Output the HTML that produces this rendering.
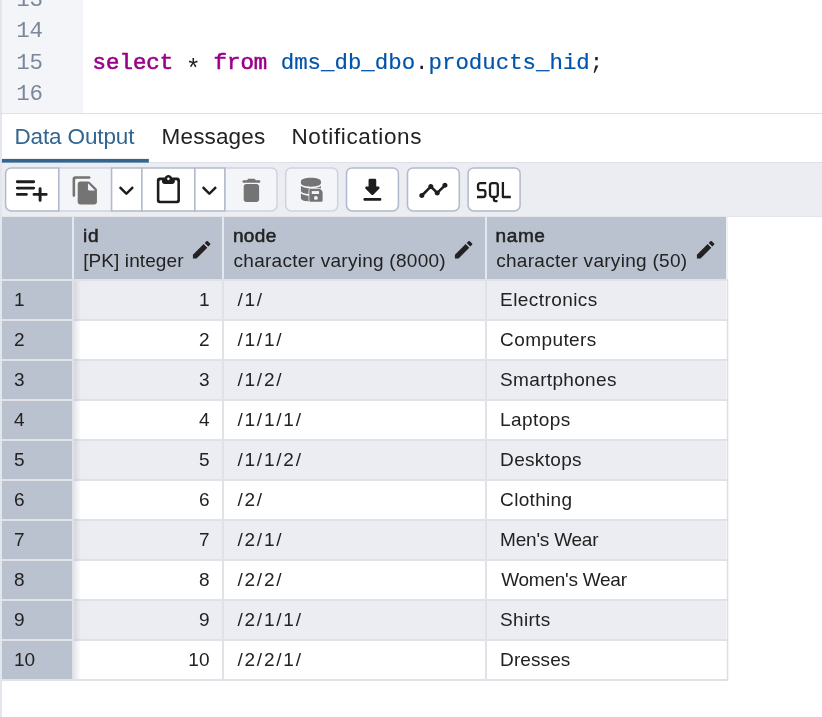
<!DOCTYPE html>
<html>
<head>
<meta charset="utf-8">
<title>Query Tool</title>
<style>
html,body{margin:0;padding:0;}
body{width:822px;height:717px;overflow:hidden;background:#fff;position:relative;will-change:transform;font-family:"Liberation Sans",sans-serif;color:#222;}
.abs{position:absolute;}
#leftb{left:0;top:0;width:2px;height:717px;background:#e4e6ed;}
#gutter{left:2px;top:0;width:81px;height:113px;background:#f3f5f9;}
.ln{position:absolute;left:2px;width:41px;text-align:right;font-family:"Liberation Mono",monospace;font-size:22.4px;line-height:31.4px;height:31.4px;color:#7c8799;white-space:pre;}
#code{position:absolute;left:92.6px;top:48.4px;font-family:"Liberation Mono",monospace;font-size:22.4px;line-height:31.4px;height:31.4px;white-space:pre;color:#222;}
.kw{color:#990088;-webkit-text-stroke:0.6px #990088;}
.v2{color:#0055aa;-webkit-text-stroke:0.2px #0055aa;}
#edb{left:0;top:113px;width:822px;height:1.4px;background:#dde0e6;}
.tab{position:absolute;top:123px;height:28px;line-height:28px;font-size:22.5px;white-space:pre;color:#222;}
#ul{left:2px;top:159px;width:147px;height:3.6px;background:#326690;}
#tabb{left:0;top:162.4px;width:822px;height:1px;background:#dde0e6;}
#tb{left:2px;top:163px;width:820px;height:54px;background:#ecedf2;}
#tbb{left:2px;top:215.6px;width:820px;height:1.4px;background:#e3e5eb;}
.ic{position:absolute;top:174.7px;width:30.8px;height:30.8px;fill:#1d1d1d;}
.ic.dis{fill:#747474;}
.hd{position:absolute;top:217px;height:62px;background:#bac1cf;}
.rh{position:absolute;left:2px;width:70px;height:38px;background:#bac1cf;}
.row{position:absolute;left:74px;width:652px;height:38px;}
.row.odd{background:#ecedf2;}
.hl{position:absolute;left:2px;width:726px;height:2px;background:#e0e2e8;}
.vl{position:absolute;top:281px;width:2px;height:400px;background:#e0e2e8;}
.vh{position:absolute;top:217px;width:2px;height:64px;background:#e4e7ed;}
.t{position:absolute;font-size:19px;line-height:38px;height:38px;letter-spacing:0;white-space:pre;color:#222;}
.hn{position:absolute;top:223.6px;font-size:19px;line-height:24px;-webkit-text-stroke:0.55px #222;white-space:pre;color:#222;}
.ht{position:absolute;top:248.8px;font-size:19px;line-height:24px;white-space:pre;color:#222;}
.pen{position:absolute;top:238px;width:23.3px;height:23.3px;fill:#222;}
#shadow{left:74px;top:281px;width:7px;height:398px;background:linear-gradient(to right,rgba(60,70,90,.13),rgba(60,70,90,0));}
</style>
</head>
<body>
<div id="gutter" class="abs"></div><div id="leftb" class="abs"></div>
<div class="ln" style="top:-15.5px">13</div>
<div class="ln" style="top:15.9px">14</div>
<div class="ln" style="top:47.9px">15</div>
<div class="ln" style="top:78.7px">16</div>
<div id="code"><span class="kw">select</span> <span style="position:relative;top:7.5px;font-size:25px;line-height:10px;display:inline-block;width:13.44px;text-indent:-0.8px">*</span> <span class="kw">from</span> <span class="v2">dms_db_dbo</span>.<span class="v2">products_hid</span>;</div>
<div id="edb" class="abs"></div>
<div class="tab" style="left:14.5px;letter-spacing:-0.137px;color:#326690">Data Output</div>
<div class="tab" style="left:161.6px;letter-spacing:0.143px">Messages</div>
<div class="tab" style="left:291.4px;letter-spacing:0.625px">Notifications</div>
<div id="tabb" class="abs"></div><svg class="abs" style="left:0;top:156px" width="160" height="8" viewBox="0 156 160 8"><rect x="1.950" y="158.900" width="146.900" height="3.700" fill="#326690"/></svg>
<div id="tb" class="abs"></div><div id="tbb" class="abs"></div>
<svg class="abs" style="left:0;top:163px" width="822" height="54" viewBox="0 163 822 54"><path d="M58.7 167.9H111.6V210.9H58.7V167.9Z" fill="#f4f5f9" stroke="#cdd3e0" stroke-width="1.5"/><path d="M224.8 167.9H271.4A5.6 5.6 0 0 1 277.0 173.5V205.3A5.6 5.6 0 0 1 271.4 210.9H224.8V167.9Z" fill="#f4f5f9" stroke="#cdd3e0" stroke-width="1.5"/><path d="M291.3 167.9H332.09999999999997A5.6 5.6 0 0 1 337.7 173.5V205.3A5.6 5.6 0 0 1 332.09999999999997 210.9H291.3A5.6 5.6 0 0 1 285.7 205.3V173.5A5.6 5.6 0 0 1 291.3 167.9Z" fill="#f4f5f9" stroke="#cdd3e0" stroke-width="1.5"/><path d="M11.2 167.9H58.7V210.9H11.2A5.6 5.6 0 0 1 5.6 205.3V173.5A5.6 5.6 0 0 1 11.2 167.9Z" fill="#fff" stroke="#b1b9cc" stroke-width="1.5"/><path d="M111.6 167.9H141.9V210.9H111.6V167.9Z" fill="#fff" stroke="#b1b9cc" stroke-width="1.5"/><path d="M141.9 167.9H194.9V210.9H141.9V167.9Z" fill="#fff" stroke="#b1b9cc" stroke-width="1.5"/><path d="M194.9 167.9H224.8V210.9H194.9V167.9Z" fill="#fff" stroke="#b1b9cc" stroke-width="1.5"/><path d="M352.1 167.9H392.79999999999995A5.6 5.6 0 0 1 398.4 173.5V205.3A5.6 5.6 0 0 1 392.79999999999995 210.9H352.1A5.6 5.6 0 0 1 346.5 205.3V173.5A5.6 5.6 0 0 1 352.1 167.9Z" fill="#fff" stroke="#b1b9cc" stroke-width="1.5"/><path d="M413.1 167.9H453.7A5.6 5.6 0 0 1 459.3 173.5V205.3A5.6 5.6 0 0 1 453.7 210.9H413.1A5.6 5.6 0 0 1 407.5 205.3V173.5A5.6 5.6 0 0 1 413.1 167.9Z" fill="#fff" stroke="#b1b9cc" stroke-width="1.5"/><path d="M473.70000000000005 167.9H514.5A5.6 5.6 0 0 1 520.1 173.5V205.3A5.6 5.6 0 0 1 514.5 210.9H473.70000000000005A5.6 5.6 0 0 1 468.1 205.3V173.5A5.6 5.6 0 0 1 473.70000000000005 167.9Z" fill="#fff" stroke="#b1b9cc" stroke-width="1.5"/></svg>
<svg class="ic dis" style="left:69.75px" viewBox="0 0 24 24"><path d="M15 1H4c-1.1 0-2 .9-2 2v13c0 .55.45 1 1 1s1-.45 1-1V4c0-.55.45-1 1-1h10c.55 0 1-.45 1-1s-.45-1-1-1zm.59 4.59l4.830 4.830c.37.37.58.88.58 1.410V21c0 1.1-.9 2-2 2H7.990C6.890 23 6 22.1 6 21l.01-14c0-1.1.89-2 1.990-2h6.170c.53 0 1.040.21 1.420.590zM15 12h4.500L14 6.500V11c0 .55.45 1 1 1z"/></svg>
<svg class="ic" style="left:111.05px" viewBox="0 0 24 24"><path d="M8.120 9.290L12 13.170l3.880-3.880c.39-.39 1.020-.39 1.410 0 .39.39.39 1.020 0 1.410l-4.590 4.590c-.39.39-1.020.39-1.410 0L6.700 10.700c-.39-.39-.39-1.020 0-1.410.39-.38 1.030-.39 1.420 0z"/></svg>
<svg class="ic" style="left:153.00px" viewBox="0 0 24 24"><path d="M19 2h-4.180C14.400.840 13.300 0 12 0S9.600.840 9.180 2H5c-1.100 0-2 .9-2 2v16c0 1.100.9 2 2 2h14c1.100 0 2-.9 2-2V4c0-1.100-.9-2-2-2zm-7 0c.55 0 1 .45 1 1s-.45 1-1 1-1-.45-1-1 .45-1 1-1zm6 18H6c-.55 0-1-.45-1-1V5c0-.55.45-1 1-1h1v1c0 1.100.9 2 2 2h6c1.100 0 2-.9 2-2V4h1c.55 0 1 .45 1 1v14c0 .55-.45 1-1 1z"/></svg>
<svg class="ic" style="left:194.15px" viewBox="0 0 24 24"><path d="M8.120 9.290L12 13.170l3.880-3.880c.39-.39 1.020-.39 1.410 0 .39.39.39 1.020 0 1.410l-4.590 4.590c-.39.39-1.020.39-1.410 0L6.700 10.700c-.39-.39-.39-1.020 0-1.410.39-.38 1.030-.39 1.420 0z"/></svg>
<svg class="ic dis" style="left:235.50px" viewBox="0 0 24 24"><path d="M6 19c0 1.100.9 2 2 2h8c1.100 0 2-.9 2-2V9c0-1.100-.9-2-2-2H8c-1.100 0-2 .9-2 2v10zM18 4h-2.500l-.71-.71c-.18-.18-.44-.29-.7-.29H9.910c-.26 0-.52.11-.7.290L8.500 4H6c-.55 0-1 .45-1 1s.45 1 1 1h12c.55 0 1-.45 1-1s-.45-1-1-1z"/></svg>
<svg class="ic" style="left:357.05px" viewBox="0 0 24 24"><path d="M16.59 9H15V4c0-.55-.45-1-1-1h-4c-.55 0-1 .45-1 1v5H7.41c-.89 0-1.34 1.08-.71 1.71l4.59 4.59c.39.39 1.02.39 1.41 0l4.59-4.59c.63-.63.19-1.71-.7-1.71zM5 19c0 .55.45 1 1 1h12c.55 0 1-.45 1-1s-.45-1-1-1H6c-.55 0-1 .45-1 1z"/></svg>
<svg class="ic" style="left:418.00px" viewBox="0 0 24 24"><path d="M23 8c0 1.1-.9 2-2 2-.18 0-.35-.02-.51-.07l-3.56 3.55c.05.16.07.34.07.52 0 1.1-.9 2-2 2s-2-.9-2-2c0-.18.02-.36.07-.52l-2.55-2.55c-.16.05-.34.07-.52.07s-.36-.02-.52-.07l-4.55 4.56c.05.16.07.33.07.51 0 1.1-.9 2-2 2s-2-.9-2-2 .9-2 2-2c.18 0 .35.02.51.07l4.56-4.55C8.02 9.36 8 9.18 8 9c0-1.1.9-2 2-2s2 .9 2 2c0 .18-.02.36-.07.52l2.55 2.55c.16-.05.34-.07.52-.07s.36.02.52.07l3.55-3.56C19.02 8.35 19 8.18 19 8c0-1.1.9-2 2-2s2 .9 2 2z"/></svg>
<svg class="abs" style="left:0;top:163px" width="822" height="54" viewBox="0 163 822 54">
<g stroke="#1d1d1d" stroke-width="2.9" stroke-linecap="round" fill="none">
<path d="M17.3 181.7H33.7M17.3 188.1H33.7M17.3 194.4H26.4M34 194.4H46.2M40.1 188.6V200.4"/>
</g>
<g fill="#747474">
<path transform="translate(300.9 177.8) scale(0.04475 0.046875)" d="M448 73.143v45.714C448 159.143 347.667 192 224 192S0 159.143 0 118.857V73.143C0 32.857 100.333 0 224 0s224 32.857 224 73.143zM448 176v102.857C448 319.143 347.667 352 224 352S0 319.143 0 278.857V176c48.125 33.143 136.208 48.572 224 48.572S399.874 209.143 448 176zm0 160v102.857C448 479.143 347.667 512 224 512S0 479.143 0 438.857V336c48.125 33.143 136.208 48.572 224 48.572S399.874 369.143 448 336z"/>
<path stroke="#f4f5f9" stroke-width="1.5" d="M310.500 188.800h9.700l2.400 2.900v8.900a1.200 1.200 0 0 1 -1.200 1.200h-10.900a1.200 1.200 0 0 1 -1.200 -1.200v-10.600a1.200 1.200 0 0 1 1.200 -1.200z"/>
<path d="M310.500 188.800h9.700l2.400 2.900v8.900a1.200 1.200 0 0 1 -1.200 1.200h-10.900a1.200 1.200 0 0 1 -1.200 -1.200v-10.600a1.200 1.200 0 0 1 1.200 -1.200z"/>
<rect x="311.750" y="191.100" width="7.300" height="2.900" fill="#f4f5f9"/>
<circle cx="315.900" cy="197.900" r="1.950" fill="#f4f5f9"/>
</g>
<g stroke="#1d1d1d" stroke-width="2.3" fill="none" stroke-linejoin="round" stroke-linecap="butt">
<path d="M486.2 183.2H480.200a2.200 2.200 0 0 0 -2.200 2.200v2.600a2.200 2.200 0 0 0 2.200 2.200h3a2.200 2.200 0 0 1 2.200 2.200v2.400a2.200 2.200 0 0 1 -2.200 2.200H477"/>
<path d="M492.4 183.2h3a2.400 2.400 0 0 1 2.400 2.400v9a2.400 2.400 0 0 1 -2.400 2.400h-3a2.400 2.400 0 0 1 -2.400 -2.400v-9a2.400 2.400 0 0 1 2.400 -2.400zM493.900 197v2.600a1.600 1.600 0 0 0 1.600 1.600h2"/>
<path d="M502.9 182V197H510.800"/>
</g>
</svg>
<div class="hd" style="left:2px;width:70px"></div>
<div class="hd" style="left:74px;width:148px"></div>
<div class="hd" style="left:224px;width:261px"></div>
<div class="hd" style="left:487px;width:239px"></div>
<div class="vh" style="left:72px"></div>
<div class="vh" style="left:222px"></div>
<div class="vh" style="left:485px"></div>
<div class="vh" style="left:726px;background:#f1f2f6"></div>
<div class="hn" style="left:83.0px;letter-spacing:0.9px">id</div><div class="ht" style="left:83.2px;letter-spacing:0.095px">[PK] integer</div>
<div class="hn" style="left:232.9px;letter-spacing:0.35px">node</div><div class="ht" style="left:233.6px;letter-spacing:0.265px">character varying (8000)</div>
<div class="hn" style="left:495.6px;letter-spacing:0.6px">name</div><div class="ht" style="left:496.2px;letter-spacing:0.292px">character varying (50)</div>
<svg class="pen" style="left:189.9px" viewBox="0 0 24 24"><path d="M3 17.25V21h3.75L17.81 9.94l-3.75-3.75L3 17.25zM20.71 7.04c.39-.39.39-1.02 0-1.41l-2.340-2.340c-.39-.39-1.02-.39-1.41 0l-1.83 1.83 3.75 3.75 1.83-1.830z"/></svg>
<svg class="pen" style="left:452.4px" viewBox="0 0 24 24"><path d="M3 17.25V21h3.75L17.81 9.94l-3.75-3.75L3 17.25zM20.71 7.04c.39-.39.39-1.02 0-1.41l-2.340-2.340c-.39-.39-1.02-.39-1.41 0l-1.83 1.83 3.75 3.75 1.83-1.830z"/></svg>
<svg class="pen" style="left:694.1px" viewBox="0 0 24 24"><path d="M3 17.25V21h3.75L17.81 9.94l-3.75-3.75L3 17.25zM20.71 7.04c.39-.39.39-1.02 0-1.41l-2.340-2.340c-.39-.39-1.02-.39-1.41 0l-1.83 1.83 3.75 3.75 1.83-1.830z"/></svg>
<div class="rh" style="top:281px"></div><div class="row odd" style="top:281px"></div>
<div class="t" style="left:14px;top:281px">1</div>
<div class="t" style="left:100px;width:109.5px;text-align:right;top:281px">1</div>
<div class="t" style="left:237.4px;letter-spacing:1.8px;top:281px">/1/</div>
<div class="t" style="left:500.1px;letter-spacing:0.418px;top:281px">Electronics</div>
<div class="rh" style="top:321px"></div><div class="row " style="top:321px"></div>
<div class="t" style="left:14px;top:321px">2</div>
<div class="t" style="left:100px;width:109.5px;text-align:right;top:321px">2</div>
<div class="t" style="left:237.4px;letter-spacing:1.8px;top:321px">/1/1/</div>
<div class="t" style="left:500.1px;letter-spacing:0.41px;top:321px">Computers</div>
<div class="rh" style="top:361px"></div><div class="row odd" style="top:361px"></div>
<div class="t" style="left:14px;top:361px">3</div>
<div class="t" style="left:100px;width:109.5px;text-align:right;top:361px">3</div>
<div class="t" style="left:237.4px;letter-spacing:1.8px;top:361px">/1/2/</div>
<div class="t" style="left:500.1px;letter-spacing:0.329px;top:361px">Smartphones</div>
<div class="rh" style="top:401px"></div><div class="row " style="top:401px"></div>
<div class="t" style="left:14px;top:401px">4</div>
<div class="t" style="left:100px;width:109.5px;text-align:right;top:401px">4</div>
<div class="t" style="left:237.4px;letter-spacing:1.8px;top:401px">/1/1/1/</div>
<div class="t" style="left:500.1px;letter-spacing:0.431px;top:401px">Laptops</div>
<div class="rh" style="top:441px"></div><div class="row odd" style="top:441px"></div>
<div class="t" style="left:14px;top:441px">5</div>
<div class="t" style="left:100px;width:109.5px;text-align:right;top:441px">5</div>
<div class="t" style="left:237.4px;letter-spacing:1.8px;top:441px">/1/1/2/</div>
<div class="t" style="left:500.1px;letter-spacing:0.328px;top:441px">Desktops</div>
<div class="rh" style="top:481px"></div><div class="row " style="top:481px"></div>
<div class="t" style="left:14px;top:481px">6</div>
<div class="t" style="left:100px;width:109.5px;text-align:right;top:481px">6</div>
<div class="t" style="left:237.4px;letter-spacing:1.8px;top:481px">/2/</div>
<div class="t" style="left:500.1px;letter-spacing:0.322px;top:481px">Clothing</div>
<div class="rh" style="top:521px"></div><div class="row odd" style="top:521px"></div>
<div class="t" style="left:14px;top:521px">7</div>
<div class="t" style="left:100px;width:109.5px;text-align:right;top:521px">7</div>
<div class="t" style="left:237.4px;letter-spacing:1.8px;top:521px">/2/1/</div>
<div class="t" style="left:500.1px;letter-spacing:-0.221px;top:521px">Men's Wear</div>
<div class="rh" style="top:561px"></div><div class="row " style="top:561px"></div>
<div class="t" style="left:14px;top:561px">8</div>
<div class="t" style="left:100px;width:109.5px;text-align:right;top:561px">8</div>
<div class="t" style="left:237.4px;letter-spacing:1.8px;top:561px">/2/2/</div>
<div class="t" style="left:501.2px;letter-spacing:-0.25px;top:561px">Women's Wear</div>
<div class="rh" style="top:601px"></div><div class="row odd" style="top:601px"></div>
<div class="t" style="left:14px;top:601px">9</div>
<div class="t" style="left:100px;width:109.5px;text-align:right;top:601px">9</div>
<div class="t" style="left:237.4px;letter-spacing:1.8px;top:601px">/2/1/1/</div>
<div class="t" style="left:500.1px;letter-spacing:0.307px;top:601px">Shirts</div>
<div class="rh" style="top:641px"></div><div class="row " style="top:641px"></div>
<div class="t" style="left:14px;top:641px">10</div>
<div class="t" style="left:100px;width:109.5px;text-align:right;top:641px">10</div>
<div class="t" style="left:237.4px;letter-spacing:1.8px;top:641px">/2/2/1/</div>
<div class="t" style="left:500.1px;letter-spacing:0.086px;top:641px">Dresses</div>
<div class="hl" style="top:279px"></div>
<div class="hl" style="top:319px"></div>
<div class="hl" style="top:359px"></div>
<div class="hl" style="top:399px"></div>
<div class="hl" style="top:439px"></div>
<div class="hl" style="top:479px"></div>
<div class="hl" style="top:519px"></div>
<div class="hl" style="top:559px"></div>
<div class="hl" style="top:599px"></div>
<div class="hl" style="top:639px"></div>
<div class="hl" style="top:679px"></div>
<div id="shadow" class="abs"></div>
<div class="vl" style="left:72px"></div>
<div class="vl" style="left:222px"></div>
<div class="vl" style="left:485px"></div>
<svg class="abs" style="left:724px;top:279px" width="6" height="404" viewBox="724 279 6 404"><rect x="726.700" y="280.500" width="1.600" height="400.500" fill="#dddfe7"/></svg>
</body>
</html>
